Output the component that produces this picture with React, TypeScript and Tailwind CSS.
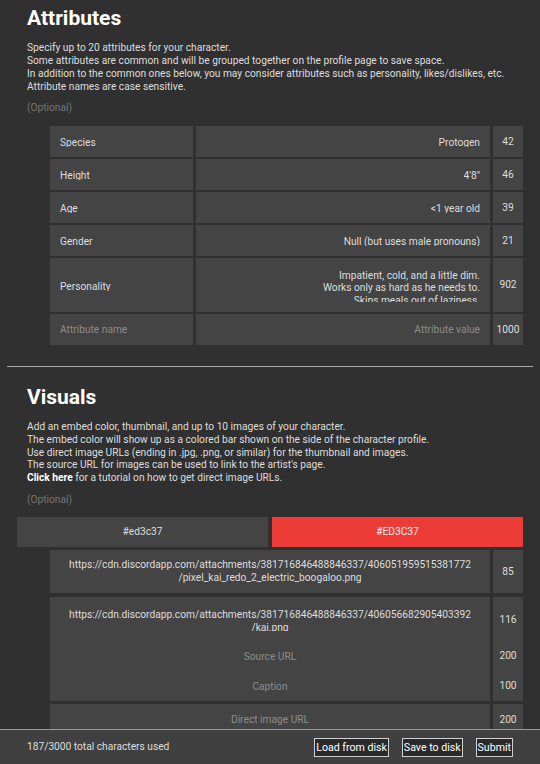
const attributes = [
  { name: "Species", value: ["Protogen"], count: 42 },
  { name: "Height", value: ["4'8\""], count: 46 },
  { name: "Age", value: ["<1 year old"], count: 39 },
  { name: "Gender", value: ["Null (but uses male pronouns)"], count: 21 },
  {
    name: "Personality",
    value: [
      "Impatient, cold, and a little dim.",
      "Works only as hard as he needs to.",
      "Skips meals out of laziness.",
    ],
    count: 902,
  },
];

const visualsText = [
  "Add an embed color, thumbnail, and up to 10 images of your character.",
  "The embed color will show up as a colored bar shown on the side of the character profile.",
  "Use direct image URLs (ending in .jpg, .png, or similar) for the thumbnail and images.",
  "The source URL for images can be used to link to the artist's page.",
];

function Cell({ children, className = "" }: { children: React.ReactNode; className?: string }) {
  return <div className={"bg-[#444444] flex items-center " + className}>{children}</div>;
}

function AttributeRow({ name, value, count }: { name: string; value: string[]; count: number }) {
  const tall = value.length > 1;
  return (
    <>
      <Cell className={tall ? "h-[54px] px-[10px]" : "h-[31px] px-[10px]"}>
        <span className="block h-[11px] overflow-hidden leading-[13px]">{name}</span>
      </Cell>
      <Cell className="justify-end px-[10px] text-right">
        <span className={tall ? "block h-[33px] overflow-hidden leading-[12.5px] pt-[1px]" : "block h-[11px] overflow-hidden leading-[13px]"}>
          {value.map((line, i) => (
            <span key={i} className="block">
              {line}
            </span>
          ))}
        </span>
      </Cell>
      <Cell className="justify-center">{count}</Cell>
    </>
  );
}

function Button({ children }: { children: React.ReactNode }) {
  return (
    <button className="h-[19px] border border-[#d0d0d0] bg-[#2a2a2a] px-[1px] text-[10.6px] leading-[17px] text-white">
      {children}
    </button>
  );
}

function ImageGroup({ url, counts }: { url?: string[]; counts: number[] }) {
  const top = url ? "h-[45px]" : "h-[32px]";
  return (
    <div className="ml-[33px] grid grid-cols-[440px_30px] gap-x-[3px]">
      <div className="flex flex-col bg-[#444444] text-center">
        <div className={"flex items-center justify-center " + top}>
          {url ? (
            <span className="block h-[23px] overflow-hidden leading-[13px]">
              {url.map((line, i) => (
                <span key={i} className="block">
                  {line}
                </span>
              ))}
            </span>
          ) : (
            <span className="text-[#8c8c8c]">Direct image URL</span>
          )}
        </div>
        <div className="flex h-[30px] items-center justify-center text-[#8c8c8c]">Source URL</div>
        <div className="flex h-[29px] items-center justify-center text-[#8c8c8c]">Caption</div>
      </div>
      <div className="flex flex-col bg-[#444444] text-center">
        <div className={"flex items-center justify-center " + top}>{counts[0]}</div>
        <div className="flex h-[28px] items-center justify-center">{counts[1]}</div>
        <div className="flex h-[31px] items-center justify-center">{counts[2]}</div>
      </div>
    </div>
  );
}

export default function App() {
  return (
    <div className="min-h-screen bg-[#303030] pb-[60px] font-['Roboto',sans-serif] text-[10.2px] text-[#dedede]">
      <section className="px-[17px] pt-[5px]">
        <h1 className="pl-[10px] text-[21px] font-bold leading-[26px] text-white">Attributes</h1>
        <div className="mt-[10px] pl-[10px] leading-[13px]">
          <p>Specify up to 20 attributes for your character.</p>
          <p>Some attributes are common and will be grouped together on the profile page to save space.</p>
          <p>In addition to the common ones below, you may consider attributes such as personality, likes/dislikes, etc.</p>
          <p>Attribute names are case sensitive.</p>
        </div>
        <p className="mt-[8px] pl-[10px] leading-[13px] text-[#767676]">(Optional)</p>

        <div className="mt-[12px] ml-[33px] grid grid-cols-[143px_294px_30px] gap-x-[3px] gap-y-[2px]">
          {attributes.map((a) => (
            <AttributeRow key={a.name} {...a} />
          ))}
          <Cell className="h-[31px] px-[10px] text-[#8c8c8c]">Attribute name</Cell>
          <Cell className="justify-end px-[10px] text-[#8c8c8c]">Attribute value</Cell>
          <Cell className="justify-center">1000</Cell>
        </div>
      </section>

      <hr className="mx-[7px] mt-[21px] border-0 border-t border-[#a8a8a8]" />

      <section className="px-[17px]">
        <h2 className="mt-[17px] pl-[10px] text-[21px] font-bold leading-[26px] text-white">Visuals</h2>
        <div className="mt-[11px] pl-[10px] leading-[12.75px]">
          {visualsText.map((t) => (
            <p key={t}>{t}</p>
          ))}
          <p>
            <span className="font-bold text-white">Click here</span> for a tutorial on how to get direct image URLs.
          </p>
        </div>
        <p className="mt-[8px] pl-[10px] leading-[13px] text-[#767676]">(Optional)</p>

        <div className="mt-[11px] grid grid-cols-2 gap-x-[4px]">
          <div className="flex h-[30px] items-center justify-center bg-[#444444]">#ed3c37</div>
          <div className="flex h-[30px] items-center justify-center bg-[#ed3c37] text-[#f3f3f3]">#ED3C37</div>
        </div>

        <div className="mt-[3px] ml-[33px] grid grid-cols-[440px_30px] gap-x-[3px]">
          <div className="flex h-[43px] items-center justify-center bg-[#444444] text-center leading-[13px]">
            <span>
              <span className="block">https://cdn.discordapp.com/attachments/381716846488846337/406051959515381772</span>
              <span className="block">/pixel_kai_redo_2_electric_boogaloo.png</span>
            </span>
          </div>
          <Cell className="justify-center">85</Cell>
        </div>

        <div className="mt-[4px]">
          <ImageGroup
            url={["https://cdn.discordapp.com/attachments/381716846488846337/406056682905403392", "/kai.png"]}
            counts={[116, 200, 100]}
          />
        </div>
        <div className="mt-[3px]">
          <ImageGroup counts={[200, 200, 100]} />
        </div>
      </section>

      <footer className="fixed inset-x-0 bottom-0 flex h-[35px] items-center border-t border-[#9a9a9a] bg-[#404040] pl-[27px] pr-[27px]">
        <span>187/3000 total characters used</span>
        <div className="ml-auto flex gap-[13px]">
          <Button>Load from disk</Button>
          <Button>Save to disk</Button>
          <Button>Submit</Button>
        </div>
      </footer>
    </div>
  );
}
